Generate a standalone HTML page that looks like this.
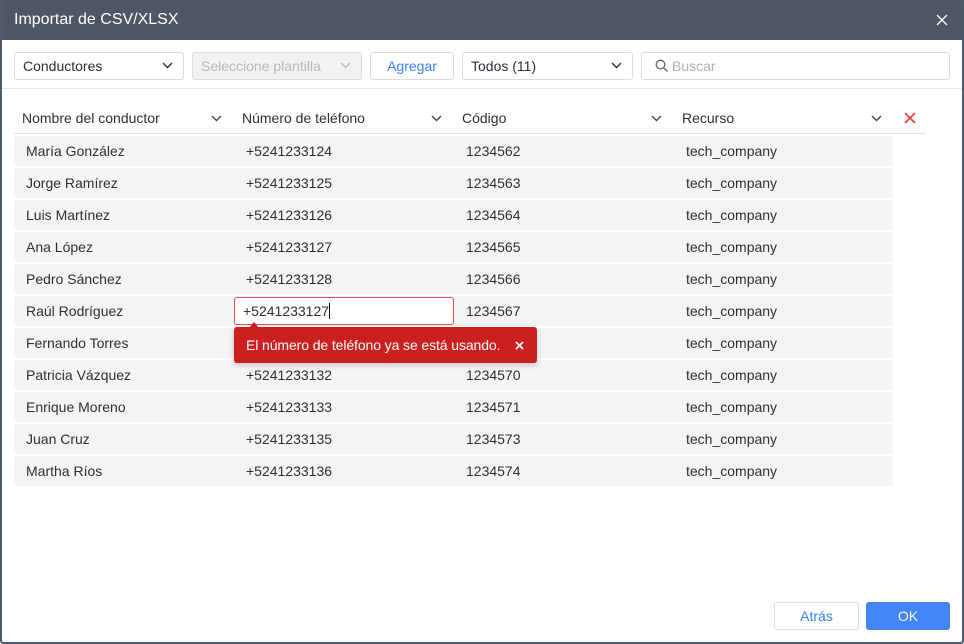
<!DOCTYPE html>
<html><head><meta charset="utf-8"><style>
*{box-sizing:border-box;margin:0;padding:0}
body{width:964px;height:644px;overflow:hidden;font-family:"Liberation Sans",sans-serif;background:#fff;position:relative;color:#2b2f36}
.frame{position:absolute;left:0;top:0;width:964px;height:644px;border:2px solid #4e5a6e;border-top:none;border-radius:3px}
.hdr{position:absolute;left:0;top:0;width:964px;height:40px;background:#4f5765;color:#fff;font-size:16px;line-height:40px;padding-left:14px}
.close{position:absolute;right:16px;top:14px;width:12px;height:12px}
.box{position:absolute;top:52px;height:28px;border:1px solid #dcdcdc;border-radius:3px;font-size:14px;line-height:26px;padding-left:8px}
.chev{position:absolute;right:10px;top:9px}
.sep{position:absolute;left:2px;right:2px;top:88px;height:1px;background:#e6e6e6}
.th{position:absolute;top:104px;font-size:14px;line-height:28px}
.hline{position:absolute;left:14px;width:912px;top:133px;height:1px;background:#e2e2e2}
.row{position:absolute;left:14px;width:879px;height:30px;background:#f4f4f4;border-radius:3px;font-size:14px;line-height:30px}
.row span{position:absolute}
.btn{position:absolute;top:602px;height:28px;border-radius:3px;font-size:14px;line-height:26px;text-align:center}
</style></head><body>
<div class="hdr">Importar de CSV/XLSX
<svg class="close" viewBox="0 0 12 12"><path d="M1 1L11 11M11 1L1 11" stroke="#fff" stroke-width="1.3"/></svg></div>
<div class="frame"></div>

<div class="box" style="left:14px;width:170px">Conductores<svg class="chev" width="11" height="7" viewBox="0 0 11 7"><path d="M1 1l4.5 4.5L10 1" fill="none" stroke="#333" stroke-width="1.5"/></svg></div>
<div class="box" style="left:192px;width:170px;background:#f2f2f2;color:#b6b6b6">Seleccione plantilla<svg class="chev" width="11" height="7" viewBox="0 0 11 7"><path d="M1 1l4.5 4.5L10 1" fill="none" stroke="#bbb" stroke-width="1.5"/></svg></div>
<div class="box" style="left:370px;width:84px;padding:0;text-align:center;color:#3b82f6">Agregar</div>
<div class="box" style="left:462px;width:171px">Todos (11)<svg class="chev" width="11" height="7" viewBox="0 0 11 7"><path d="M1 1l4.5 4.5L10 1" fill="none" stroke="#333" stroke-width="1.5"/></svg></div>
<div class="box" style="left:641px;width:309px;color:#b0b0b0;padding-left:30px">Buscar<svg style="position:absolute;left:13px;top:6px" width="14" height="14" viewBox="0 0 14 14"><circle cx="5.5" cy="5.5" r="4.3" fill="none" stroke="#666" stroke-width="1.3"/><path d="M8.7 8.7L12.5 12.5" stroke="#666" stroke-width="1.4"/></svg></div>
<div class="sep"></div>

<div class="th" style="left:22px">Nombre del conductor</div>
<div class="th" style="left:242px">Número de teléfono</div>
<div class="th" style="left:462px">Código</div>
<div class="th" style="left:682px">Recurso</div>
<svg style="position:absolute;left:211px;top:115px" width="11" height="7" viewBox="0 0 11 7"><path d="M1 1l4.5 4.5L10 1" fill="none" stroke="#444" stroke-width="1.4"/></svg>
<svg style="position:absolute;left:431px;top:115px" width="11" height="7" viewBox="0 0 11 7"><path d="M1 1l4.5 4.5L10 1" fill="none" stroke="#444" stroke-width="1.4"/></svg>
<svg style="position:absolute;left:651px;top:115px" width="11" height="7" viewBox="0 0 11 7"><path d="M1 1l4.5 4.5L10 1" fill="none" stroke="#444" stroke-width="1.4"/></svg>
<svg style="position:absolute;left:871px;top:115px" width="11" height="7" viewBox="0 0 11 7"><path d="M1 1l4.5 4.5L10 1" fill="none" stroke="#444" stroke-width="1.4"/></svg>
<svg style="position:absolute;left:904px;top:112px" width="12" height="12" viewBox="0 0 12 12"><path d="M1 1L11 11M11 1L1 11" stroke="#f04040" stroke-width="1.8"/></svg>
<div class="hline"></div>

<div class="row" style="top:136px"><span style="left:12px">María González</span><span style="left:232px">+5241233124</span><span style="left:452px">1234562</span><span style="left:672px">tech_company</span></div>
<div class="row" style="top:168px"><span style="left:12px">Jorge Ramírez</span><span style="left:232px">+5241233125</span><span style="left:452px">1234563</span><span style="left:672px">tech_company</span></div>
<div class="row" style="top:200px"><span style="left:12px">Luis Martínez</span><span style="left:232px">+5241233126</span><span style="left:452px">1234564</span><span style="left:672px">tech_company</span></div>
<div class="row" style="top:232px"><span style="left:12px">Ana López</span><span style="left:232px">+5241233127</span><span style="left:452px">1234565</span><span style="left:672px">tech_company</span></div>
<div class="row" style="top:264px"><span style="left:12px">Pedro Sánchez</span><span style="left:232px">+5241233128</span><span style="left:452px">1234566</span><span style="left:672px">tech_company</span></div>
<div class="row" style="top:296px"><span style="left:12px">Raúl Rodríguez</span><span style="left:452px">1234567</span><span style="left:672px">tech_company</span></div>
<div class="row" style="top:328px"><span style="left:12px">Fernando Torres</span><span style="left:452px">1234568</span><span style="left:672px">tech_company</span></div>
<div class="row" style="top:360px"><span style="left:12px">Patricia Vázquez</span><span style="left:232px">+5241233132</span><span style="left:452px">1234570</span><span style="left:672px">tech_company</span></div>
<div class="row" style="top:392px"><span style="left:12px">Enrique Moreno</span><span style="left:232px">+5241233133</span><span style="left:452px">1234571</span><span style="left:672px">tech_company</span></div>
<div class="row" style="top:424px"><span style="left:12px">Juan Cruz</span><span style="left:232px">+5241233135</span><span style="left:452px">1234573</span><span style="left:672px">tech_company</span></div>
<div class="row" style="top:456px"><span style="left:12px">Martha Ríos</span><span style="left:232px">+5241233136</span><span style="left:452px">1234574</span><span style="left:672px">tech_company</span></div>

<div style="position:absolute;left:234px;top:297px;width:220px;height:28px;border:1px solid #e55050;border-radius:3px;background:#fff;font-size:14px;line-height:26px;padding-left:8px">+5241233127<span style="display:inline-block;width:1px;height:16px;background:#000;vertical-align:-3px"></span></div>
<div style="position:absolute;left:249px;top:322px;width:0;height:0;border-left:5px solid transparent;border-right:5px solid transparent;border-bottom:6px solid #cc1f1f"></div>
<div style="position:absolute;left:234px;top:327px;width:303px;height:36px;background:#cc1f1f;border-radius:3px;color:#fff;font-size:14px;line-height:36px;padding-left:12px;box-shadow:0 2px 6px rgba(0,0,0,.2);letter-spacing:-0.1px">El número de teléfono ya se está usando.
<svg style="position:absolute;left:281px;top:14px" width="9" height="9" viewBox="0 0 9 9"><path d="M1 1L8 8M8 1L1 8" stroke="#fff" stroke-width="1.8"/></svg></div>

<div class="btn" style="left:774px;width:85px;border:1px solid #dcdcdc;color:#3b82f6">Atrás</div>
<div class="btn" style="left:866px;width:84px;background:#4287f5;color:#fff;line-height:28px">OK</div>
</body></html>
